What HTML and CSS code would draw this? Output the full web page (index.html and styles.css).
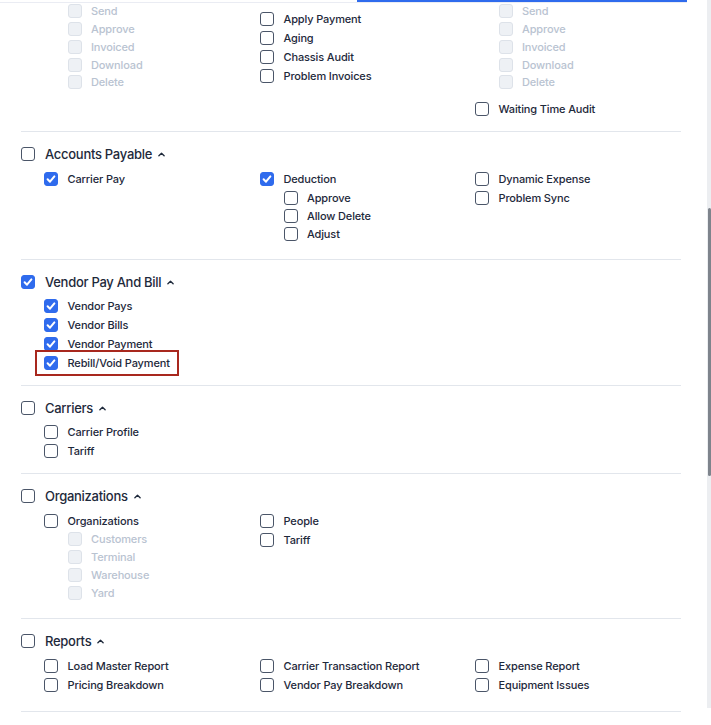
FILE: index.html
```html
<!DOCTYPE html>
<html lang="en">
<head>
<meta charset="utf-8">
<title>Permissions</title>
<link rel="stylesheet" href="styles.css">
</head>
<body>
<div class="tabbar"><div class="tab-indicator"></div></div>
<div class="scrolltrack"><div class="scrollthumb"></div></div>

<main class="perms">
  <!-- partially scrolled section -->
  <section class="psec psec-top">
    <div class="cols">
      <div class="col">
        <div class="children children-dense">
          <label class="row disabled"><span class="cb"></span><span>Send</span></label>
          <label class="row disabled"><span class="cb"></span><span>Approve</span></label>
          <label class="row disabled"><span class="cb"></span><span>Invoiced</span></label>
          <label class="row disabled"><span class="cb"></span><span>Download</span></label>
          <label class="row disabled"><span class="cb"></span><span>Delete</span></label>
        </div>
      </div>
      <div class="col col-offset">
        <label class="row"><span class="cb"></span><span>Apply Payment</span></label>
        <label class="row"><span class="cb"></span><span>Aging</span></label>
        <label class="row"><span class="cb"></span><span>Chassis Audit</span></label>
        <label class="row"><span class="cb"></span><span>Problem Invoices</span></label>
      </div>
      <div class="col">
        <div class="children children-dense">
          <label class="row disabled"><span class="cb"></span><span>Send</span></label>
          <label class="row disabled"><span class="cb"></span><span>Approve</span></label>
          <label class="row disabled"><span class="cb"></span><span>Invoiced</span></label>
          <label class="row disabled"><span class="cb"></span><span>Download</span></label>
          <label class="row disabled"><span class="cb"></span><span>Delete</span></label>
        </div>
        <label class="row after-group"><span class="cb"></span><span>Waiting Time Audit</span></label>
      </div>
    </div>
  </section>

  <section class="psec">
    <div class="head"><span class="cb"></span><span class="head-title">Accounts Payable</span><svg class="chev" viewBox="0 0 8 5" width="8" height="5"><path d="M1 4 L4 1 L7 4" /></svg></div>
    <div class="cols">
      <div class="col">
        <label class="row"><span class="cb on"><svg viewBox="0 0 14 14"><path d="M3.6 7.3 L6 9.7 L10.4 4.4"/></svg></span><span>Carrier Pay</span></label>
      </div>
      <div class="col">
        <label class="row"><span class="cb on"><svg viewBox="0 0 14 14"><path d="M3.6 7.3 L6 9.7 L10.4 4.4"/></svg></span><span>Deduction</span></label>
        <div class="children">
          <label class="row"><span class="cb"></span><span>Approve</span></label>
          <label class="row"><span class="cb"></span><span>Allow Delete</span></label>
          <label class="row"><span class="cb"></span><span>Adjust</span></label>
        </div>
      </div>
      <div class="col">
        <label class="row"><span class="cb"></span><span>Dynamic Expense</span></label>
        <label class="row"><span class="cb"></span><span>Problem Sync</span></label>
      </div>
    </div>
  </section>

  <section class="psec">
    <div class="head"><span class="cb on"><svg viewBox="0 0 14 14"><path d="M3.6 7.3 L6 9.7 L10.4 4.4"/></svg></span><span class="head-title">Vendor Pay And Bill</span><svg class="chev" viewBox="0 0 8 5" width="8" height="5"><path d="M1 4 L4 1 L7 4" /></svg></div>
    <div class="cols cols-tight">
      <div class="col">
        <label class="row"><span class="cb on"><svg viewBox="0 0 14 14"><path d="M3.6 7.3 L6 9.7 L10.4 4.4"/></svg></span><span>Vendor Pays</span></label>
        <label class="row"><span class="cb on"><svg viewBox="0 0 14 14"><path d="M3.6 7.3 L6 9.7 L10.4 4.4"/></svg></span><span>Vendor Bills</span></label>
        <label class="row"><span class="cb on"><svg viewBox="0 0 14 14"><path d="M3.6 7.3 L6 9.7 L10.4 4.4"/></svg></span><span>Vendor Payment</span></label>
        <label class="row highlight"><span class="cb on"><svg viewBox="0 0 14 14"><path d="M3.6 7.3 L6 9.7 L10.4 4.4"/></svg></span><span>Rebill/Void Payment</span></label>
      </div>
      <div class="col"></div>
      <div class="col"></div>
    </div>
  </section>

  <section class="psec">
    <div class="head"><span class="cb"></span><span class="head-title">Carriers</span><svg class="chev" viewBox="0 0 8 5" width="8" height="5"><path d="M1 4 L4 1 L7 4" /></svg></div>
    <div class="cols cols-tight">
      <div class="col">
        <label class="row"><span class="cb"></span><span>Carrier Profile</span></label>
        <label class="row"><span class="cb"></span><span>Tariff</span></label>
      </div>
      <div class="col"></div>
      <div class="col"></div>
    </div>
  </section>

  <section class="psec">
    <div class="head"><span class="cb"></span><span class="head-title">Organizations</span><svg class="chev" viewBox="0 0 8 5" width="8" height="5"><path d="M1 4 L4 1 L7 4" /></svg></div>
    <div class="cols">
      <div class="col">
        <label class="row"><span class="cb"></span><span>Organizations</span></label>
        <div class="children children-close">
          <label class="row disabled"><span class="cb"></span><span>Customers</span></label>
          <label class="row disabled"><span class="cb"></span><span>Terminal</span></label>
          <label class="row disabled"><span class="cb"></span><span>Warehouse</span></label>
          <label class="row disabled"><span class="cb"></span><span>Yard</span></label>
        </div>
      </div>
      <div class="col">
        <label class="row"><span class="cb"></span><span>People</span></label>
        <label class="row"><span class="cb"></span><span>Tariff</span></label>
      </div>
      <div class="col"></div>
    </div>
  </section>

  <section class="psec psec-last">
    <div class="head"><span class="cb"></span><span class="head-title">Reports</span><svg class="chev" viewBox="0 0 8 5" width="8" height="5"><path d="M1 4 L4 1 L7 4" /></svg></div>
    <div class="cols">
      <div class="col">
        <label class="row"><span class="cb"></span><span>Load Master Report</span></label>
        <label class="row"><span class="cb"></span><span>Pricing Breakdown</span></label>
      </div>
      <div class="col">
        <label class="row"><span class="cb"></span><span>Carrier Transaction Report</span></label>
        <label class="row"><span class="cb"></span><span>Vendor Pay Breakdown</span></label>
      </div>
      <div class="col">
        <label class="row"><span class="cb"></span><span>Expense Report</span></label>
        <label class="row"><span class="cb"></span><span>Equipment Issues</span></label>
      </div>
    </div>
  </section>
</main>
</body>
</html>
```

FILE: styles.css
```css
* { box-sizing: border-box; }

html, body {
  margin: 0;
  padding: 0;
  background: #ffffff;
  overflow: hidden;
}

body {
  font-family: Inter, "Noto Sans", "Liberation Sans", sans-serif;
  color: #1e293b;
  width: 711px;
  height: 725px;
  position: relative;
}

/* sticky tab bar remnant over scrolled content */
.tabbar {
  position: absolute;
  left: 0;
  top: 0;
  width: 687px;
  height: 3px;
  border-bottom: 1px solid #eaecf3;
  z-index: 5;
}
.tab-indicator {
  position: absolute;
  left: 357px;
  top: 0;
  width: 330px;
  height: 2px;
  background: #2f6bed;
}

/* scrollbar */
.scrolltrack {
  position: absolute;
  left: 707px;
  top: 0;
  width: 4px;
  height: 708px;
  background: #eceef1;
  z-index: 5;
}
.scrollthumb {
  position: absolute;
  left: 1px;
  top: 208px;
  width: 3px;
  height: 268px;
  background: #7e848c;
  border-radius: 2px;
}

.perms {
  margin-left: 21px;
  width: 660px;
}

.psec {
  border-bottom: 1px solid #e2e6ec;
  padding: 13px 0 13px 0;
}
.psec-top { padding-top: 2px; }
.psec-last { padding-bottom: 17px; }

.head {
  display: flex;
  align-items: center;
  height: 18px;
  font-size: 13px;
  font-weight: 500;
  letter-spacing: -0.28px;
  color: #1e293b;
}
.head .cb { margin-right: 10px; }
.chev {
  margin-left: 6px;
  fill: none;
  stroke: #1e293b;
  stroke-width: 1.5;
  stroke-linecap: round;
  stroke-linejoin: round;
  width: 7px;
  height: 5px;
}

.cols {
  display: grid;
  grid-template-columns: 216px 215px 1fr;
  padding-left: 23px;
}
.head + .cols { margin-top: 7px; }
.head + .cols-tight { margin-top: 6px; }

.col {
  display: flex;
  flex-direction: column;
  gap: 1px;
  align-items: flex-start;
}
.col-offset { padding-top: 8px; }

.children {
  display: flex;
  flex-direction: column;
  padding-left: 23.5px;
  margin-bottom: 3px;
}
.children-close { margin-top: -1px; }
.children-dense .row:nth-child(4),
.children-dense .row:nth-child(5) { margin-top: -0.5px; }
.after-group { margin-top: 5px; }

.row {
  display: flex;
  align-items: center;
  height: 18px;
  font-size: 11px;
  font-weight: 500;
  letter-spacing: -0.14px;
  color: #1e293b;
  white-space: nowrap;
}
.row .cb { margin-right: 9.5px; }

.cb {
  flex: none;
  width: 14px;
  height: 14px;
  border: 1.5px solid #4a5568;
  border-radius: 3px;
  background: #ffffff;
  display: inline-flex;
  align-items: center;
  justify-content: center;
}
.cb.on {
  background: #2f6bed;
  border-color: #2f6bed;
}
.cb.on svg {
  width: 14px;
  height: 14px;
  fill: none;
  stroke: #ffffff;
  stroke-width: 2;
  stroke-linecap: round;
  stroke-linejoin: round;
  flex: none;
}

.row.disabled { color: #b9c3d1; }
.row.disabled .cb {
  background: #eef1f5;
  border: 1px solid #dde2e9;
}

.highlight { position: relative; }
.highlight::after {
  content: "";
  position: absolute;
  left: -9px;
  right: -9px;
  top: -4px;
  bottom: -4px;
  border: 2px solid #a8281e;
  pointer-events: none;
}
```
